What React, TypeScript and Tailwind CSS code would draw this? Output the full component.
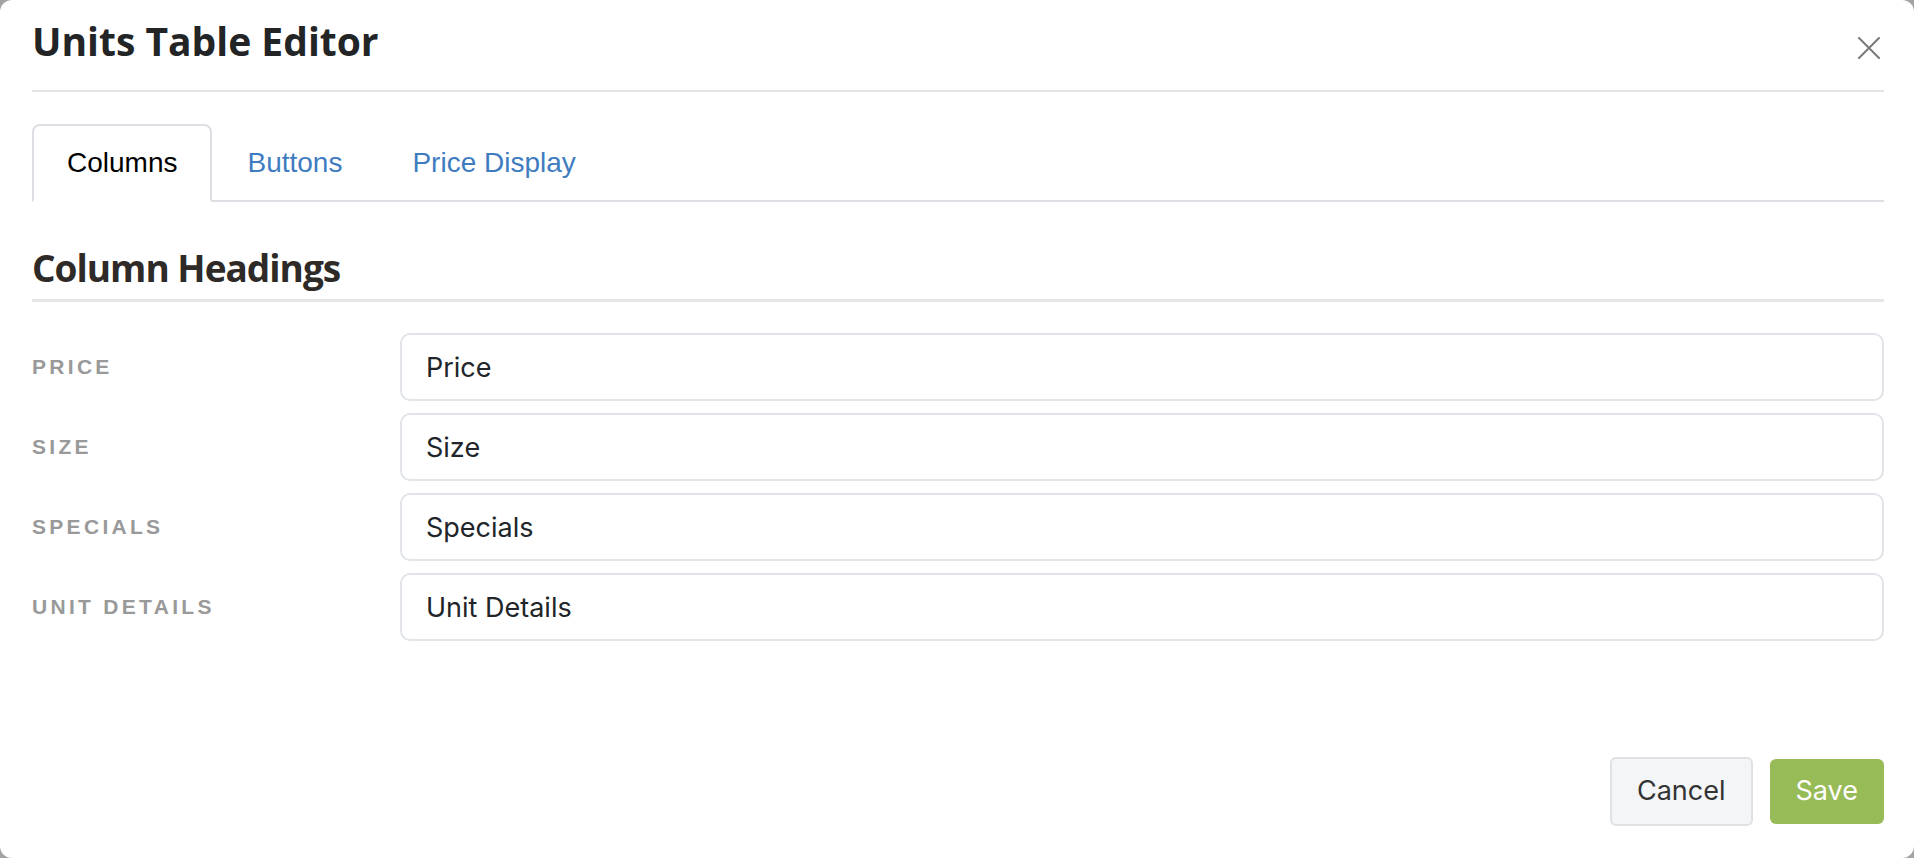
import React, { useState } from "react";

const rows = [
  { label: "PRICE", value: "Price" },
  { label: "SIZE", value: "Size" },
  { label: "SPECIALS", value: "Specials" },
  { label: "UNIT DETAILS", value: "Unit Details" },
];

const tabs = ["Columns", "Buttons", "Price Display"];

const CloseIcon = () => (
  <svg width="22" height="22" viewBox="0 0 22 22" fill="none">
    <path d="M1 1L21 21M21 1L1 21" stroke="#7a7a7a" strokeWidth="2" strokeLinecap="round" />
  </svg>
);

export default function App() {
  const [active, setActive] = useState("Columns");

  return (
    <div className="min-h-screen bg-[#a3a3a3]">
      <div className="flex h-[858px] w-[1914px] flex-col rounded-[12px] bg-white pb-8 pl-8 pr-[30px] pt-[21px]">
        {/* header */}
        <div className="flex items-start justify-between border-b-2 border-[#e4e4e4] pb-[29px]">
          <h1 className="font-['Open_Sans',sans-serif] text-[39px] font-bold leading-[40px] text-[#222426]">
            Units Table Editor
          </h1>
          <button className="mr-[4px] mt-[16px]">
            <CloseIcon />
          </button>
        </div>

        {/* tabs */}
        <div className="mt-[32px] flex border-b-2 border-[#dcdfe3]">
          {tabs.map((t) => (
            <button
              key={t}
              onClick={() => setActive(t)}
              className={
                t === active
                  ? "-mb-[2px] flex h-[78px] items-center rounded-t-[8px] border-2 border-[#dcdfe3] border-b-white bg-white px-[33px] font-['Liberation_Sans',Arial,sans-serif] text-[28px] text-black"
                  : "-mb-[2px] flex h-[78px] items-center rounded-t-[8px] border-2 border-transparent px-[33px] font-['Liberation_Sans',Arial,sans-serif] text-[28px] text-[#3f7cbf]"
              }
            >
              {t}
            </button>
          ))}
        </div>

        {/* section heading */}
        <h2 className="mt-[47px] border-b-[3px] border-[#e6e6e6] pb-[12px] font-['Open_Sans',sans-serif] text-[37px] font-bold leading-[38px] tracking-[-1px] text-[#2e2a27]">
          Column Headings
        </h2>

        {/* rows */}
        <div className="mt-[31px] grid grid-cols-[368px_1fr] items-center gap-y-[12px]">
          {rows.map((r) => (
            <React.Fragment key={r.label}>
              <label className="font-['Liberation_Sans',Arial,sans-serif] text-[21px] font-bold tracking-[3.3px] text-[#999999]">
                {r.label}
              </label>
              <input
                defaultValue={r.value}
                className="h-[68px] w-full rounded-[10px] border-2 border-[#e1e4e8] px-[24px] font-['Inter',sans-serif] text-[27px] text-[#212529] outline-none"
              />
            </React.Fragment>
          ))}
        </div>

        {/* footer */}
        <div className="mt-auto flex items-center justify-end gap-[17px]">
          <button className="h-[69px] rounded-[6px] border-2 border-[#dfe1e5] bg-[#f4f5f7] px-[25px] font-['Inter',sans-serif] text-[27px] text-[#333333]">
            Cancel
          </button>
          <button className="h-[65px] rounded-[6px] bg-[#97bb57] px-[26px] font-['Inter',sans-serif] text-[27px] text-white">
            Save
          </button>
        </div>
      </div>
    </div>
  );
}
